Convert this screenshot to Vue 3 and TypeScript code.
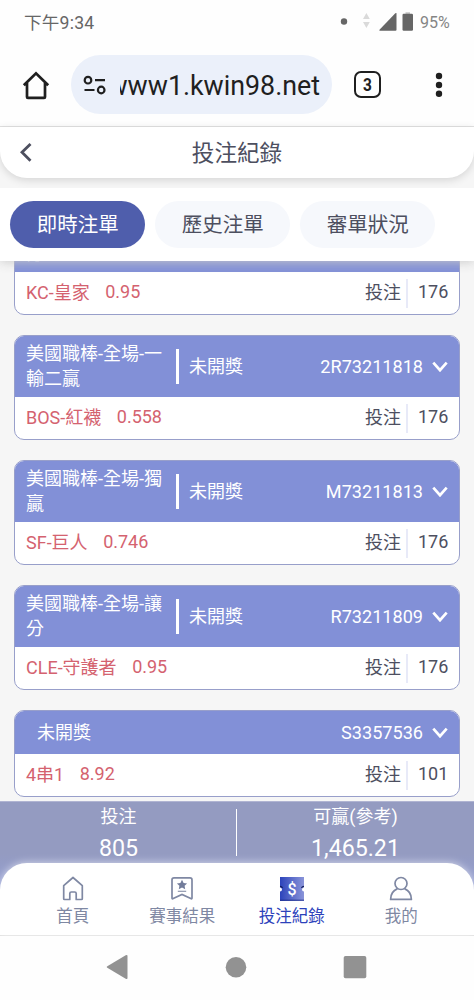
<script setup lang="ts">
interface Bet {
  title?: string
  id: string
  pick: string
  odds: string
  stake: number
}

const tabs: string[] = ['即時注單', '歷史注單', '審單狀況']
const activeTab = '即時注單'

const bets: Bet[] = [
  { title: '美國職棒-全場-讓分', id: 'R73211822', pick: 'KC-皇家', odds: '0.95', stake: 176 },
  { title: '美國職棒-全場-一輸二贏', id: '2R73211818', pick: 'BOS-紅襪', odds: '0.558', stake: 176 },
  { title: '美國職棒-全場-獨贏', id: 'M73211813', pick: 'SF-巨人', odds: '0.746', stake: 176 },
  { title: '美國職棒-全場-讓分', id: 'R73211809', pick: 'CLE-守護者', odds: '0.95', stake: 176 },
  { id: 'S3357536', pick: '4串1', odds: '8.92', stake: 101 },
]
</script>

<template>
  <div class="screen">
    <div class="status">
      <span class="time">下午9:34</span>
      <svg class="status-icons" width="76" height="22" viewBox="0 0 76 22">
        <circle cx="7" cy="10.5" r="3.2" fill="#666" />
        <path d="M29.4 2l3.4 6h-6.8zM29.4 17l3.4-6h-6.8z" fill="#dadada" />
        <path d="M59.5 2.5v16.3q0 1-1 1H43q-1.300 0-.5-1L58.300 2.300q1.200-.8 1.200.2z" fill="#666" />
        <rect x="68.500" y="1.200" width="4.500" height="3" fill="#c9c9c9" />
        <rect x="65.500" y="2.800" width="10.500" height="17" rx="1.200" fill="#666" />
      </svg>
      <span class="battery">95%</span>
    </div>

    <div class="browser">
      <svg class="home" width="28" height="30" viewBox="0 0 28 30">
        <path d="M1.800 15.300L14 3.300l12.200 12M5 13V27q0 .9.900.9h16.200q.9 0 .9-.9V13" fill="none" stroke="#1f1f1f" stroke-width="2.700" />
      </svg>
      <div class="address">
        <svg class="tune" width="24" height="20" viewBox="0 0 24 20">
          <g fill="none" stroke="#1f1f1f" stroke-width="2.200">
            <circle cx="6" cy="5.200" r="3.300" />
            <path d="M13 5.200h10M2.500 15h10" />
            <circle cx="19.200" cy="15" r="3.300" />
          </g>
        </svg>
        <div class="url"><span>www1.kwin98.net</span></div>
      </div>
      <div class="tab-count"><span>3</span></div>
      <svg class="dots" width="8" height="26" viewBox="0 0 8 26" fill="#1f1f1f">
        <circle cx="4" cy="4" r="3.200" /><circle cx="4" cy="13" r="3.200" /><circle cx="4" cy="21.800" r="3.200" />
      </svg>
    </div>

    <div class="app">
      <header class="page-head">
        <svg class="back" width="14" height="20" viewBox="0 0 14 20">
          <path d="M11.500 1L3 9.300l8.500 8.400" fill="none" stroke="#4d4f5f" stroke-width="2.800" />
        </svg>
        <h1>投注紀錄</h1>
      </header>

      <nav class="tabs">
        <button v-for="tab in tabs" :key="tab" type="button" :class="{ active: tab === activeTab }">{{ tab }}</button>
      </nav>

      <main class="list">
        <article v-for="bet in bets" :key="bet.id" class="card">
          <div class="card-head" :class="{ short: !bet.title }">
            <div v-if="bet.title" class="match">{{ bet.title }}</div>
            <i v-if="bet.title" class="bar"></i>
            <span class="state">未開獎</span>
            <span class="bet-id">{{ bet.id }}</span>
            <svg class="chevron" width="16" height="12" viewBox="0 0 16 12">
              <path d="M1.300 1.700L8 9.200l6.700-7.500" fill="none" stroke="#fff" stroke-width="2.700" />
            </svg>
          </div>
          <div class="card-body">
            <span class="pick">{{ bet.pick }}</span>
            <span class="odds">{{ bet.odds }}</span>
            <span class="stake-label">投注</span>
            <span class="stake">{{ bet.stake }}</span>
          </div>
        </article>
      </main>

      <section class="summary">
        <div class="total">
          <span>投注</span>
          <strong>805</strong>
        </div>
        <div class="total">
          <span>可贏(參考)</span>
          <strong>1,465.21</strong>
        </div>
      </section>

      <nav class="bottom">
        <a>
          <svg width="26" height="26" viewBox="0 0 26 26">
            <path d="M3.700 10.700L13 2.500l9.300 8.200v13q0 .8-.8.8H16.200v-6q0-1.500-1.500-1.500h-3.400q-1.500 0-1.500 1.500v6H4.500q-.8 0-.8-.8z" fill="none" stroke="#7f88a3" stroke-width="1.700" stroke-linejoin="round" />
          </svg>
          <span>首頁</span>
        </a>
        <a>
          <svg width="26" height="26" viewBox="0 0 26 26">
            <path d="M5 2.900h16q2 0 2 2V23q0 1.300-1.200.6L13 19.400l-8.800 4.200q-1.200.7-1.200-.6V4.900q0-2 2-2z" fill="none" stroke="#7f88a3" stroke-width="1.700" />
            <path d="M13 4.800l1.600 3.100 3.500.5-2.500 2.400.6 3.500-3.200-1.700-3.200 1.700.6-3.500-2.500-2.400 3.500-.5z" fill="#737d9b" />
            <path d="M8.800 16.300h8.400" stroke="#8e96ad" stroke-width="1.200" />
          </svg>
          <span>賽事結果</span>
        </a>
        <a class="current">
          <svg width="26" height="26" viewBox="0 0 26 26">
            <defs>
              <linearGradient id="ticket" x1="0" x2="1">
                <stop offset="0" stop-color="#2c44bb" />
                <stop offset="1" stop-color="#8a94d9" />
              </linearGradient>
              <linearGradient id="ticket-foot" x1="0" x2="0" y1="0" y2="1">
                <stop offset="0" stop-color="#1a2a85" stop-opacity="0" />
                <stop offset="1" stop-color="#1a2a85" stop-opacity=".8" />
              </linearGradient>
            </defs>
            <path d="M1 2h24v10.500a2 2 0 0 0 0 4V26.500H1v-10a2 2 0 0 0 0-4z" fill="url(#ticket)" />
            <path d="M1 23.500h24v3H1z" fill="url(#ticket-foot)" />
            <path d="M1 11.300a3 3 0 0 1 2.500 1.600M25 11.300a3 3 0 0 0-2.500 1.600" fill="none" stroke="#15205f" stroke-width="1.300" />
            <text x="13" y="19.500" text-anchor="middle" class="dollar">$</text>
          </svg>
          <span>投注紀錄</span>
        </a>
        <a>
          <svg width="26" height="26" viewBox="0 0 26 26">
            <g fill="none" stroke="#7f88a3" stroke-width="1.700" stroke-linejoin="round">
              <circle cx="13" cy="8.500" r="6" />
              <path d="M9.500 13.600Q2.600 16.500 2.600 24.400h20.800q0-7.900-6.900-10.800" />
            </g>
          </svg>
          <span>我的</span>
        </a>
      </nav>
    </div>

    <footer class="system">
      <svg width="24" height="26" viewBox="0 0 24 26" fill="#929292">
        <path d="M20.700 1.300q1.800-1 1.800.8v21.800q0 1.800-1.800.8L2.300 13.800q-1.300-.8 0-1.600z" />
      </svg>
      <svg width="24" height="26" viewBox="0 0 24 26" fill="#929292"><circle cx="12" cy="13.200" r="10.300" /></svg>
      <svg width="24" height="26" viewBox="0 0 24 26" fill="#929292"><rect x=".7" y="2" width="22.600" height="22.300" rx="1.800" /></svg>
    </footer>
  </div>
</template>

<style>
body {
  margin: 0;
  background: #fff;
}
</style>

<style scoped>
.screen {
  width: 474px;
  height: 1000px;
  overflow: hidden;
  display: flex;
  flex-direction: column;
  background: #fefefe;
  font-family: Roboto, "Noto Sans CJK TC", sans-serif;
  color: #4d4f5f;
}
.status {
  height: 44px;
  flex: none;
  box-sizing: border-box;
  display: flex;
  align-items: center;
  padding: 0 24px 0 24px;
  color: #666;
}
.time {
  font-size: 17.6px;
  letter-spacing: 0.2px;
  padding-bottom: 2px;
}
.status-icons {
  margin-left: auto;
}
.battery {
  margin-left: 7px;
  font-size: 16px;
  width: 30px;
  color: #858585;
  white-space: nowrap;
}
.browser {
  height: 81px;
  padding-bottom: 1px;
  flex: none;
  display: flex;
  align-items: center;
  border-bottom: 1px solid #e2e2e2;
  box-sizing: border-box;
  min-height: 83px;
}
.home {
  margin-left: 22px;
}
.address {
  margin-left: 21px;
  width: 261px;
  height: 59px;
  box-sizing: border-box;
  border-radius: 30px;
  background: #ebf0fa;
  display: flex;
  align-items: center;
  padding-left: 11px;
}
.url {
  margin-left: 14px;
  width: 200px;
  overflow: hidden;
  display: flex;
  justify-content: flex-end;
  color: #1f1f1f;
  font-size: 26.8px;
  line-height: 36px;
  padding-top: 3px;
}
.tab-count {
  box-sizing: border-box;
  width: 27px;
  height: 27px;
  margin-left: 22px;
  border: 2.5px solid #1f1f1f;
  border-radius: 7px;
  color: #1f1f1f;
  font-size: 18px;
  font-weight: 700;
  line-height: 23px;
  text-align: center;
}
.tab-count span {
  display: block;
  transform: scaleX(0.86);
}
.dots {
  margin-left: 54px;
}
.app {
  height: 808px;
  flex: none;
  display: flex;
  flex-direction: column;
  background: #f6f6f6;
  border-bottom: 1px solid #dedede;
}
.page-head {
  height: 51px;
  flex: none;
  display: flex;
  align-items: center;
  background: #fff;
  border-radius: 0 0 27px 27px;
  box-shadow: 0 2px 9px rgba(0, 0, 0, 0.14);
}
.back {
  margin-left: 19px;
}
h1 {
  margin: 0;
  flex: 1;
  padding: 0 33px 2px 0;
  text-align: center;
  font-size: 22.6px;
  font-weight: 400;
}
.tabs {
  position: relative;
  z-index: 1;
  height: 73px;
  flex: none;
  margin-top: 10px;
  box-sizing: border-box;
  padding: 13px 10.3px;
  display: flex;
  gap: 10px;
  background: #fff;
  box-shadow: 0 1px 10px rgba(200, 200, 200, 0.95);
  clip-path: inset(0 0 -14px 0);
}
.tabs button {
  width: 135px;
  height: 47px;
  padding: 0 0 4px;
  border: 0;
  border-radius: 24px;
  background: #f6f8fc;
  color: #4d4f5f;
  font: inherit;
  font-size: 20.5px;
}
.tabs .active {
  background: #4f5eac;
  color: #fff;
}
.list {
  height: 540px;
  flex: none;
  box-sizing: border-box;
  padding: 0 14px 4px;
  overflow: hidden;
  display: flex;
  flex-direction: column;
  justify-content: flex-end;
  gap: 20px;
}
.card {
  flex: none;
  border: 1px solid #989fca;
  border-radius: 10px;
  overflow: hidden;
  background: #fff;
  font-size: 18px;
}
.card-head {
  height: 61px;
  display: flex;
  align-items: center;
  padding: 0 11px;
  background: #8290d7;
  color: #fff;
}
.match {
  width: 140px;
  line-height: 25px;
  padding-bottom: 1px;
}
.bar {
  width: 3px;
  height: 35px;
  margin: 0 10px 0 10px;
  background: #fff;
}
.state {
  padding-bottom: 4px;
}
.short {
  height: 43px;
}
.short .state {
  margin-left: 11px;
}
.bet-id {
  margin-left: auto;
  font-size: 18.1px;
}
.chevron {
  margin-left: 9px;
}
.card-body {
  height: 42px;
  display: flex;
  align-items: center;
  padding: 0 11px;
}
.pick,
.odds {
  color: #d4626f;
}
.pick,
.stake-label {
  padding-bottom: 5px;
}
.odds {
  margin-left: 15.5px;
  padding-bottom: 3px;
}
.stake-label {
  margin-left: auto;
  padding-right: 5px;
}
.stake {
  box-sizing: border-box;
  width: 42px;
  height: 29px;
  border-left: 2px solid #e8eaf8;
  padding-left: 10px;
  line-height: 26px;
}
.summary {
  height: 90px;
  flex: none;
  display: flex;
  box-sizing: border-box;
  border-top: 1px solid #b0b4d2;
  background: linear-gradient(#949bc1 0 52px, #949ed0 80px);
  color: #fff;
}
.total {
  width: 237px;
  display: flex;
  flex-direction: column;
  align-items: center;
}
.total + .total {
  background: linear-gradient(#fff, #fff) 0 7px / 1px 47px no-repeat;
  margin-left: -1px;
  padding-left: 1px;
}
.total span {
  font-size: 18px;
  line-height: 30px;
}
.total strong {
  font-weight: 400;
  font-size: 23.2px;
  line-height: 32px;
}
.bottom {
  position: relative;
  height: 72px;
  flex: none;
  box-sizing: border-box;
  margin-top: -28px;
  padding: 12px 18px 0;
  display: flex;
  background: #fff;
  border-radius: 27px 27px 0 0;
  box-shadow: 0 0 9px rgba(255, 255, 255, 0.65);
}
.bottom a {
  flex: 1;
  display: flex;
  flex-direction: column;
  align-items: center;
  color: #7f88a3;
  font-size: 16.5px;
  line-height: 31px;
}
.bottom .current {
  color: #2c42bb;
}
.dollar {
  fill: #fff;
  font-size: 16px;
  font-weight: 500;
}
.system {
  flex: 1;
  display: flex;
  justify-content: center;
  gap: 95px;
  padding: 18px 2px 0 0;
}
</style>
